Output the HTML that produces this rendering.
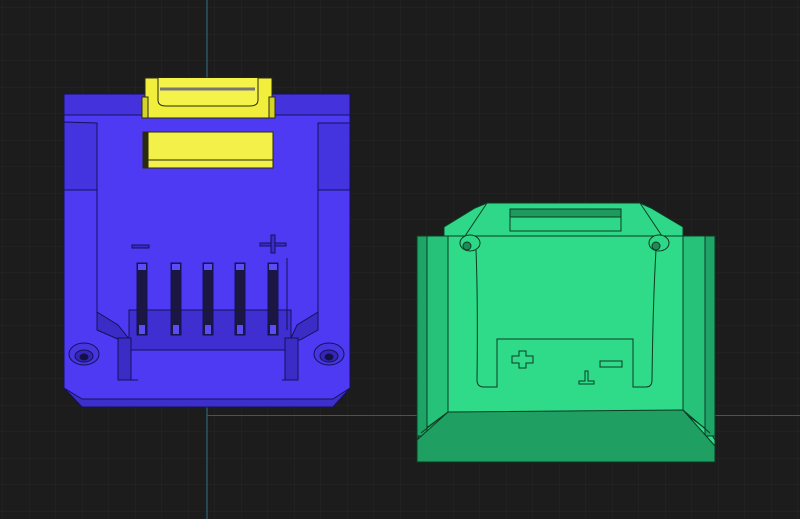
<!DOCTYPE html>
<html><head><style>
html,body{margin:0;padding:0;background:#1c1c1c;}
svg{display:block;}
</style></head><body>
<svg width="800" height="519" viewBox="0 0 800 519" xmlns="http://www.w3.org/2000/svg">
<defs>
<pattern id="g" width="26.5" height="26.5" patternUnits="userSpaceOnUse" x="3" y="8">
<path d="M26.5 0V26.5H0" fill="none" stroke="#262626" stroke-width="1"/>
</pattern>
</defs>
<rect width="800" height="519" fill="#1c1c1c"/>
<rect width="800" height="519" fill="url(#g)"/>
<line x1="207" y1="0" x2="207" y2="519" stroke="#2f6f8a" stroke-width="1"/>
<line x1="207" y1="415.5" x2="800" y2="415.5" stroke="#8a3a32" stroke-width="1"/>

<!-- BLUE PART -->
<g stroke="#15115a" stroke-width="1">
<polygon points="64,94 350,94 350,388 333,407 82,407 64,388" fill="#4e3af2"/>
<polygon points="64,388 82,399 333,399 350,388 333,407 82,407" fill="#3d2fc9"/>
<rect x="64" y="94" width="286" height="21" fill="#4432dc"/>
<polygon points="64,122 97,123 97,190 64,190" fill="#4434df"/>
<polygon points="318,123 350,123 350,190 318,190" fill="#4434df"/>
<polyline points="97,123 97,320 130,340 130,380 138,380" fill="none"/>
<polyline points="318,123 318,320 290,340 290,380 282,380" fill="none"/>
<rect x="129" y="310" width="162" height="40" fill="#3f2fd0"/>
<polygon points="97,312 118,325 130,340 120,340 97,330" fill="#3a2cc4"/>
<polygon points="318,312 297,325 290,340 300,340 318,330" fill="#3a2cc4"/>
<rect x="118" y="338" width="13" height="42" fill="#3a2cc4"/>
<rect x="285" y="338" width="13" height="42" fill="#3a2cc4"/>
<g fill="#1a1742">
<rect x="137" y="263" width="10" height="72"/>
<rect x="171" y="263" width="10" height="72"/>
<rect x="203" y="263" width="10" height="72"/>
<rect x="235" y="263" width="10" height="72"/>
<rect x="268" y="263" width="10" height="72"/>
</g>
<g fill="#5b4df5" stroke="none">
<rect x="138" y="264" width="8" height="6"/><rect x="172" y="264" width="8" height="6"/><rect x="204" y="264" width="8" height="6"/><rect x="236" y="264" width="8" height="6"/><rect x="269" y="264" width="8" height="6"/>
<rect x="139" y="325" width="6" height="9"/><rect x="173" y="325" width="6" height="9"/><rect x="205" y="325" width="6" height="9"/><rect x="237" y="325" width="6" height="9"/><rect x="270" y="325" width="6" height="9"/>
</g>
<line x1="287" y1="258" x2="287" y2="330"/>
<rect x="132" y="245" width="17" height="3" fill="#3a2cc4"/>
<rect x="260" y="243" width="26" height="3" fill="#3a2cc4"/>
<rect x="271" y="235" width="4" height="18" fill="#3a2cc4"/>
<ellipse cx="84" cy="354" rx="15" ry="11" fill="#4536e0"/>
<ellipse cx="84" cy="356" rx="9" ry="6" fill="#3526b5"/>
<ellipse cx="84" cy="357" rx="4" ry="3" fill="#151040"/>
<ellipse cx="329" cy="354" rx="15" ry="11" fill="#4536e0"/>
<ellipse cx="329" cy="356" rx="9" ry="6" fill="#3526b5"/>
<ellipse cx="329" cy="357" rx="4" ry="3" fill="#151040"/>
</g>
<g stroke="#2a2a10" stroke-width="1">
<rect x="145" y="78" width="127" height="40" fill="#f1ee3c"/>
<rect x="142" y="97" width="6" height="21" fill="#d6d22c"/>
<rect x="269" y="97" width="6" height="21" fill="#d6d22c"/>
<path d="M158 78 V100 Q158 106 166 106 H250 Q258 106 258 100 V78" fill="#f5f24a"/>
<line x1="160" y1="89" x2="255" y2="89" stroke="#777" stroke-width="3"/>
<rect x="143" y="132" width="5" height="36" fill="#2a2a10"/>
<rect x="148" y="132" width="125" height="36" fill="#f3f04a"/>
<line x1="148" y1="160" x2="273" y2="160"/>
</g>

<!-- GREEN PART -->
<g stroke="#0d3a22" stroke-width="1">
<polygon points="444,236 444,227 475,208 487,203 640,203 651,208 683,227 683,236" fill="#2fd888"/>
<polyline points="465,236 487,203" fill="none"/>
<polyline points="662,236 640,203" fill="none"/>
<rect x="510" y="209" width="111" height="22" fill="#2fd888"/>
<rect x="510" y="209" width="111" height="8" fill="#1e9a5e"/>
<rect x="417" y="236" width="298" height="226" fill="#2fda88"/>
<polygon points="417,236 448,236 448,412 421,432 417,440" fill="#26c27a"/>
<polygon points="715,236 683,236 683,412 710,432 715,440" fill="#26c27a"/>
<rect x="417" y="236" width="10" height="200" fill="#1da466"/>
<rect x="705" y="236" width="10" height="200" fill="#1da466"/>
<polygon points="448,412 683,410 715,446 715,462 417,462 417,440" fill="#1f9f62"/>
<line x1="448" y1="412" x2="421" y2="433"/>
<line x1="683" y1="410" x2="710" y2="433"/>
<path d="M476 250 Q478 300 477 380 Q477 387 484 387 H497 V339 H633 V387 H646 Q652 387 652 380 Q653 300 656 250" fill="none"/>
<g fill="#2fda88">
<path d="M512 356 h7 v-5 h7 v5 h7 v7 h-7 v5 h-7 v-5 h-7z"/>
<rect x="600" y="361" width="22" height="6"/>
<path d="M585 371 h3 v10 h6 v3 h-15 v-3 h6z"/>
</g>
<ellipse cx="470" cy="243" rx="10" ry="8" fill="#2fd888"/>
<ellipse cx="659" cy="243" rx="10" ry="8" fill="#2fd888"/>
<ellipse cx="467" cy="246" rx="4" ry="4" fill="#1e8a55"/>
<ellipse cx="656" cy="246" rx="4" ry="4" fill="#1e8a55"/>
</g>
</svg>
</body></html>
